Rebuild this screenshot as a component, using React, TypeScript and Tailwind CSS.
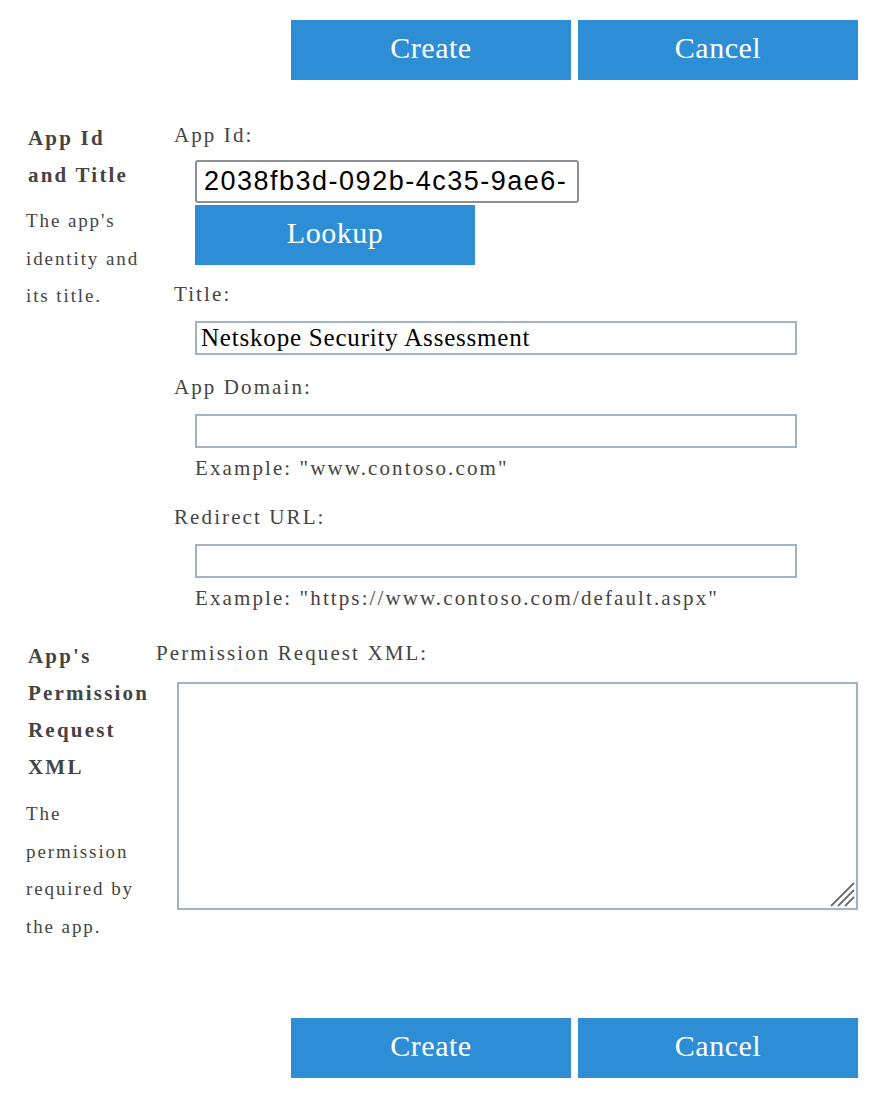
import React from "react";

function BlueButton({ label, className = "" }: { label: string; className?: string }) {
  return (
    <button
      type="button"
      className={`h-[60px] w-[280px] bg-[#2d8ed6] pb-[6px] font-['Liberation_Serif','Times_New_Roman',serif] text-[30px] tracking-[0.5px] text-white ${className}`}
    >
      {label}
    </button>
  );
}

function ButtonBar() {
  return (
    <div className="flex justify-end gap-[7px] pr-[32px]">
      <BlueButton label="Create" />
      <BlueButton label="Cancel" />
    </div>
  );
}

function Label({ children, className = "" }: { children: React.ReactNode; className?: string }) {
  return (
    <div className={`h-[30px] whitespace-nowrap text-[21px] leading-[30px] tracking-[2.1px] text-[#444] ${className}`}>
      {children}
    </div>
  );
}

function TextBox({ value = "", className = "" }: { value?: string; className?: string }) {
  return (
    <div
      className={`ml-[21px] flex h-[34px] w-[602px] items-center border-2 border-[#9fb4c7] bg-white px-[4px] text-[25px] tracking-[0.8px] text-black ${className}`}
    >
      {value}
    </div>
  );
}

function Example({ children }: { children: React.ReactNode }) {
  return (
    <div className="ml-[21px] mt-[5px] h-[30px] whitespace-nowrap text-[21px] leading-[30px] tracking-[2.1px] text-[#444]">
      {children}
    </div>
  );
}

function ResizeGrip() {
  return (
    <svg className="absolute bottom-[1px] right-[1px]" width="26" height="26" viewBox="0 0 26 26">
      <g stroke="#6b6b6b" strokeWidth="1.8">
        <line x1="2" y1="25" x2="25" y2="2" />
        <line x1="9" y1="25" x2="25" y2="9" />
        <line x1="16" y1="25" x2="25" y2="16" />
      </g>
    </svg>
  );
}

export default function App() {
  return (
    <div className="min-h-[1104px] w-[890px] bg-white font-['Liberation_Serif','Times_New_Roman',serif]">
      <div className="pt-[20px]">
        <ButtonBar />
      </div>

      {/* Section 1 */}
      <div className="mt-[40px] flex">
        <div className="w-[174px] shrink-0 pl-[26px] text-[#444]">
          <div className="w-[112px] pl-[2px] text-[21px] font-bold leading-[37px] tracking-[2.2px]">App Id and Title</div>
          <div className="mt-[8px] w-[126px] text-[19px] leading-[37.5px] tracking-[1.9px]">
            The app's identity and its title.
          </div>
        </div>
        <div className="flex flex-col">
          <Label>App Id:</Label>
          <div className="ml-[21px] mt-[10px] flex h-[43px] w-[384px] items-center overflow-hidden whitespace-nowrap rounded-[3px] border-2 border-[#8e8e9a] bg-white px-[7px] font-['Liberation_Sans',Arial,sans-serif] text-[27px] tracking-[1.5px] text-black">
            2038fb3d-092b-4c35-9ae6-
          </div>
          <BlueButton label="Lookup" className="ml-[21px] mt-[2px]" />
          <Label className="mt-[14px]">Title:</Label>
          <TextBox value="Netskope Security Assessment" className="mt-[12px]" />
          <Label className="mt-[17px]">App Domain:</Label>
          <TextBox className="mt-[12px]" />
          <Example>Example: "www.contoso.com"</Example>
          <Label className="mt-[19px]">Redirect URL:</Label>
          <TextBox className="mt-[12px]" />
          <Example>Example: "https://www.contoso.com/default.aspx"</Example>
        </div>
      </div>

      {/* Section 2 */}
      <div className="mt-[25px] flex">
        <div className="w-[156px] shrink-0 pl-[26px] text-[#444]">
          <div className="w-[126px] pl-[2px] text-[21px] font-bold leading-[37px] tracking-[2.2px]">
            App's Permission Request XML
          </div>
          <div className="mt-[9px] w-[126px] text-[19px] leading-[37.5px] tracking-[1.9px]">
            The permission required by the app.
          </div>
        </div>
        <div className="flex flex-col">
          <Label>Permission Request XML:</Label>
          <div className="relative ml-[21px] mt-[14px] h-[228px] w-[681px] border-2 border-[#9fb4c7] bg-white">
            <ResizeGrip />
          </div>
        </div>
      </div>

      <div className="mt-[73px]">
        <ButtonBar />
      </div>
    </div>
  );
}
